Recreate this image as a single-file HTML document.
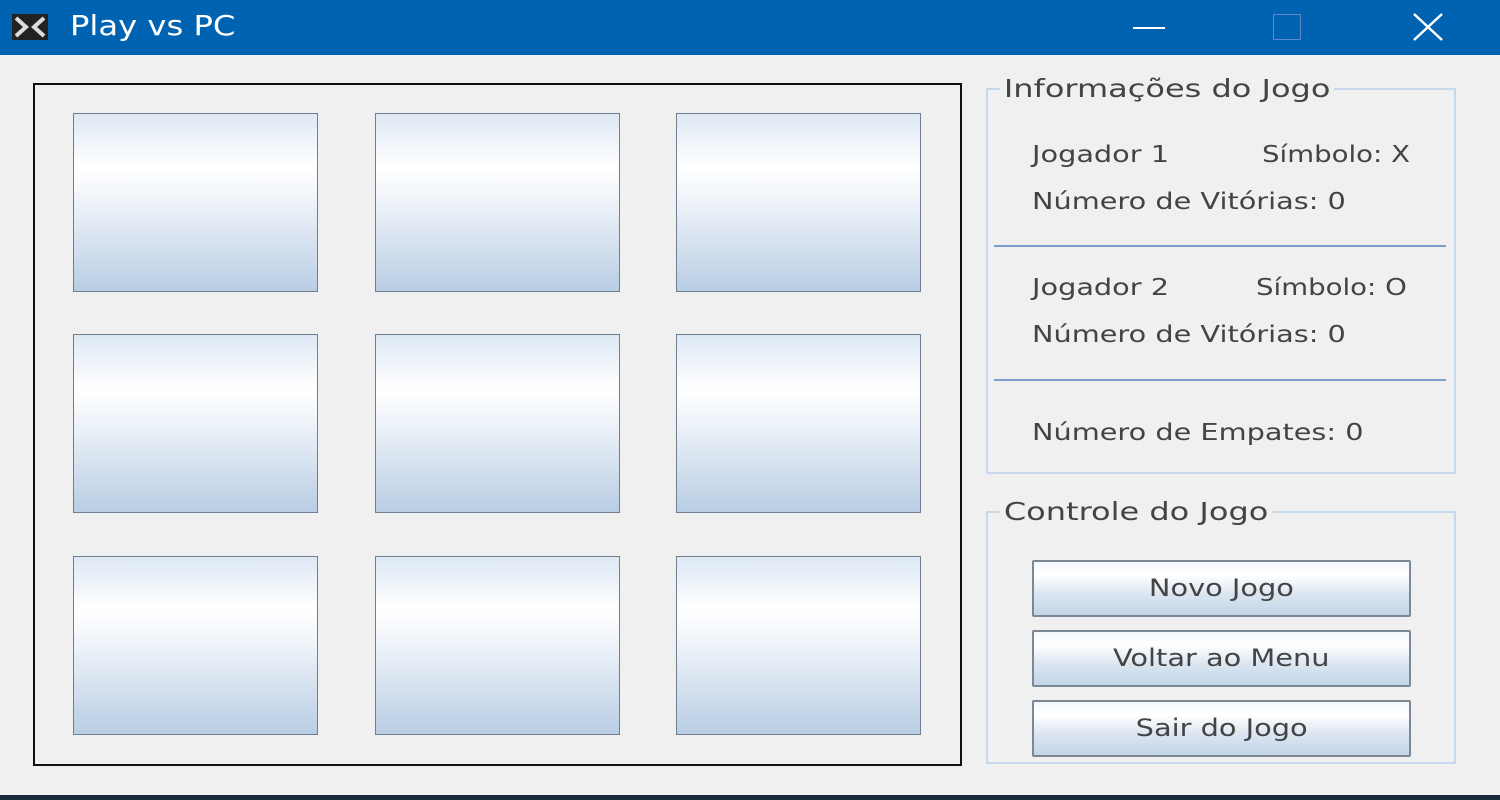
<!DOCTYPE html><html><head><style>
body{margin:0;width:1500px;height:800px;background:#f0f0f0;position:relative;overflow:hidden;font-family:"DejaVu Sans","Liberation Sans",sans-serif;color:#333}
.t{position:absolute;left:0;top:0;width:1500px;height:55px;background:#0063b1;color:#fff}
.a{position:absolute}
.cell{position:absolute;width:243px;height:177px;border:1.5px solid #6f7f90;background:linear-gradient(#dde8f4 0%,#fff 30%,#eef3f9 50%,#b9cde4 100%)}
.btn{position:absolute;left:1032px;width:375px;height:53px;border:2px solid #7d8896;border-radius:2px;background:linear-gradient(#f4f8fc 0%,#fff 25%,#dbe6f1 60%,#c3d5e8 100%);text-align:center;line-height:53px;font-size:24px;color:#444}
.btn span{display:inline-block;transform:scaleX(1.2)}
.fs{position:absolute;border:2px solid #c6d8ea}
.lg{position:absolute;background:#f0f0f0;font-size:25px;padding:0 3px;color:#444;transform:scaleX(1.28);transform-origin:left}
.tx{position:absolute;font-size:23px;color:#444;transform:scaleX(1.25);transform-origin:left;white-space:nowrap}
</style></head><body>
<div class="t">
<svg class="a" style="left:12px;top:14px" width="36" height="26"><rect width="36" height="26" fill="#222"/><path d="M4 4L14 13L4 22M32 4L22 13L32 22" stroke="#ddd" stroke-width="4" fill="none"/></svg>
<div class="a" style="left:70px;top:9px;font-size:28px;transform:scaleX(1.15);transform-origin:left">Play vs PC</div>
<div class="a" style="left:1133px;top:27px;width:32px;height:2px;background:#fff"></div>
<div class="a" style="left:1273px;top:14px;width:26px;height:24px;border:1px solid #5a8ac6"></div>
<svg class="a" style="left:1412px;top:12px" width="32" height="30"><path d="M2 2L30 28M30 2L2 28" stroke="#fff" stroke-width="2.5"/></svg>
</div>
<div class="a" style="left:33px;top:83px;width:925px;height:679px;border:2px solid #111"></div>
<div class="cell" style="left:73px;top:113px"></div><div class="cell" style="left:375px;top:113px"></div><div class="cell" style="left:676px;top:113px"></div>
<div class="cell" style="left:73px;top:334px"></div><div class="cell" style="left:375px;top:334px"></div><div class="cell" style="left:676px;top:334px"></div>
<div class="cell" style="left:73px;top:556px"></div><div class="cell" style="left:375px;top:556px"></div><div class="cell" style="left:676px;top:556px"></div>
<div class="fs" style="left:986px;top:88px;width:466px;height:382px"></div>
<div class="lg" style="left:1000px;top:74px">Informações do Jogo</div>
<div class="tx" style="left:1032px;top:142px">Jogador 1</div><div class="tx" style="left:1262px;top:142px;transform:scaleX(1.2)">Símbolo: X</div>
<div class="tx" style="left:1032px;top:189px">Número de Vitórias: 0</div>
<div class="a" style="left:994px;top:245px;width:452px;height:2px;background:#7e9ccc"></div>
<div class="tx" style="left:1032px;top:275px">Jogador 2</div><div class="tx" style="left:1256px;top:275px;transform:scaleX(1.2)">Símbolo: O</div>
<div class="tx" style="left:1032px;top:322px">Número de Vitórias: 0</div>
<div class="a" style="left:994px;top:379px;width:452px;height:2px;background:#7e9ccc"></div>
<div class="tx" style="left:1032px;top:420px">Número de Empates: 0</div>
<div class="fs" style="left:986px;top:511px;width:466px;height:249px"></div>
<div class="lg" style="left:1000px;top:497px">Controle do Jogo</div>
<div class="btn" style="top:560px"><span>Novo Jogo</span></div>
<div class="btn" style="top:630px"><span>Voltar ao Menu</span></div>
<div class="btn" style="top:700px"><span>Sair do Jogo</span></div>
<div class="a" style="left:0;top:795px;width:1500px;height:5px;background:#1a2a3a"></div>
</body></html>
